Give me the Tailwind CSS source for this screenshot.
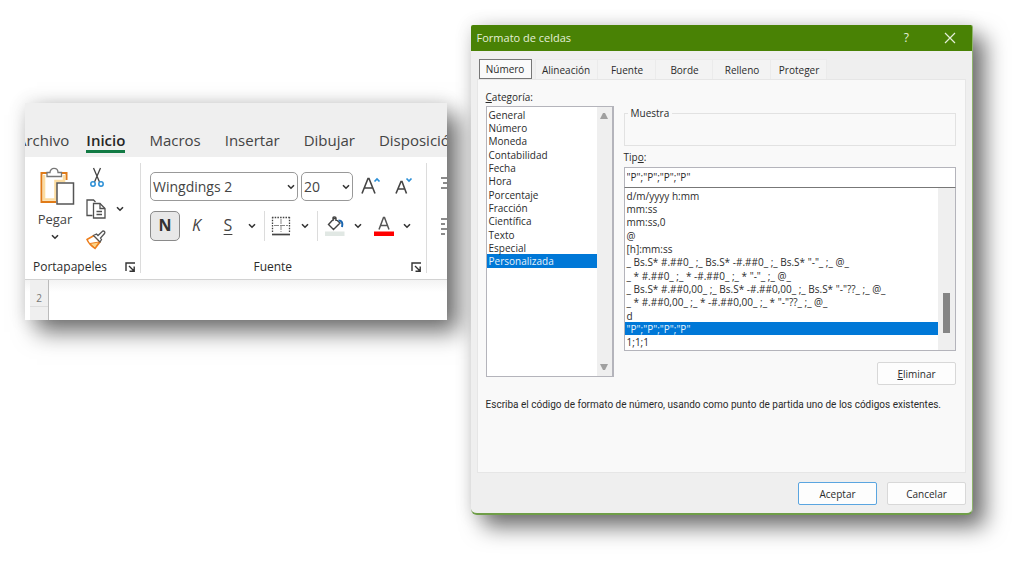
<!DOCTYPE html>
<html lang="es">
<head>
<meta charset="utf-8">
<title>Formato de celdas</title>
<script src="https://cdn.jsdelivr.net/npm/@tailwindcss/browser@4"></script>
</head>
<body class="min-h-screen bg-white font-['Open_Sans','Noto_Sans',sans-serif] text-[#2b2b2b]">
<svg class="hidden" aria-hidden="true">
  <symbol id="chev" viewBox="0 0 8 6"><path d="M1 1.2 4 4.2 7 1.2" fill="none" stroke="#333" stroke-width="1.6"/></symbol>
  <symbol id="launch" viewBox="0 0 11 11"><path d="M1 9V1H10M4 4 9 9M9.2 4.5V9.3H4.5" fill="none" stroke="#333" stroke-width="1.4"/></symbol>
</svg>
<main class="flex items-start gap-6 pt-[25px] pr-[51px] pl-[25px]">

  <!-- Cinta de opciones -->
  <section class="mt-[78px] min-w-0 flex-[422] shadow-[12px_12px_22px_rgba(0,0,0,0.55),0_0_18px_rgba(0,0,0,0.12)]">
    <div class="overflow-hidden bg-white">
      <nav class="-ml-[8px] flex h-[54px] items-end gap-[24px] bg-[#efefef] pb-1 text-[15px] leading-[19px] whitespace-nowrap text-[#444]">
        <a href="#" class="pb-[3px]">Archivo</a>
        <a href="#" class="-ml-[7px] border-b-[3px] border-[#127a44] font-semibold text-[#262626]">Inicio</a>
        <a href="#" class="pb-[3px]">Macros</a>
        <a href="#" class="pb-[3px]">Insertar</a>
        <a href="#" class="pb-[3px]">Dibujar</a>
        <a href="#" class="pb-[3px]">Disposición</a>
      </nav>
      <div class="flex h-[123px] border-b border-[#d2d2d2] py-[6px]">
        <!-- Portapapeles -->
        <div class="flex w-[116px] flex-col justify-between border-r border-[#dcdcdc]">
          <div class="flex gap-[12px] pt-1 pl-[11px]">
            <button class="flex w-[38px] flex-col items-center text-[13px] leading-[18px] text-[#444]">
              <svg class="ml-[3px] h-[40px] w-[36px]" viewBox="0 0 36 40" fill="none">
                <path d="M9 6H2.500V35H17M21 6H27.500V13" stroke="#e07b18" stroke-width="2"/>
                <path d="M5 8V32.500H16.500V14H25V8" fill="#fff" stroke="#fcdca0" stroke-width="2.600"/>
                <path d="M8 9.500V5.500H11C11 0 19 0 19 5.500H22.500V9.500Z" fill="#fff" stroke="#777" stroke-width="1.300"/>
                <rect x="18" y="16" width="16.500" height="21" fill="#fff" stroke="#555" stroke-width="1.500"/>
              </svg>
              <span class="pt-[3px]">Pegar</span>
              <svg class="mt-[6px] h-[6px] w-[8px]"><use href="#chev"/></svg>
            </button>
            <div class="flex flex-col gap-[11px]">
              <button aria-label="Cortar" class="pl-1"><svg class="h-[21px] w-[14px]" viewBox="0 0 14 21" fill="none">
                <path d="M3.500 1 9.500 15M10.500 1 4.500 15" stroke="#444" stroke-width="1.300"/>
                <circle cx="3" cy="17" r="2.200" stroke="#2b8fd6" stroke-width="1.500"/><circle cx="11" cy="17" r="2.200" stroke="#2b8fd6" stroke-width="1.500"/></svg></button>
              <button aria-label="Copiar" class="flex items-center gap-[10px]"><svg class="h-[20px] w-[20px]" viewBox="0 0 20 20" fill="none" stroke="#505050" stroke-width="1.300">
                <path d="M6.500 16.500H1V1H7.500L9.500 3"/><path d="M7.500 4.500H14L19 9.500V19H7.500Z" fill="#fff"/><path d="M14 4.500V9.500H19M10.500 12.500H16M10.500 15.500H16"/></svg>
                <svg class="h-[6px] w-[8px]"><use href="#chev"/></svg></button>
              <button aria-label="Copiar formato"><svg class="h-[20px] w-[20px]" viewBox="0 0 20 20" fill="none">
                <path d="M1 9.500 8 5.500 14 12 9 18.500C6 16.500 2.500 13 1 9.500Z" fill="#fff" stroke="#ed7d1a" stroke-width="1.500"/>
                <path d="M4 13.500 13 12 9 18Z" fill="#fbd58a" stroke="#ed7d1a" stroke-width="1"/>
                <path d="M7.500 5.500 10.500 4 12 5.500 16.500 1.200C18 .5 19.500 2 18.500 3.500L14.500 8 15.500 9.500 14 12Z" fill="#fff" stroke="#555" stroke-width="1.300"/></svg></button>
            </div>
          </div>
          <div class="flex items-center justify-between pr-1 pl-2 text-[12px] leading-3">
            <span>Portapapeles</span>
            <button aria-label="Más opciones de portapapeles"><svg class="h-[11px] w-[11px]"><use href="#launch"/></svg></button>
          </div>
        </div>
        <!-- Fuente -->
        <div class="flex min-w-0 flex-1 flex-col justify-between border-r border-[#dcdcdc] pl-[9px]">
          <div class="flex flex-col gap-[10px] pt-[9px]">
            <div class="flex items-center gap-[3px]">
              <div class="relative w-[148px]">
                <select aria-label="Fuente" class="block h-[29px] w-full appearance-none rounded-[5px] border border-[#999] bg-white pl-[2px] text-[14px] text-[#444]"><option>Wingdings 2</option></select>
                <svg class="pointer-events-none absolute top-[12px] right-[3px] h-[6px] w-[8px]"><use href="#chev"/></svg>
              </div>
              <div class="relative w-[52px]">
                <select aria-label="Tamaño de fuente" class="block h-[29px] w-full appearance-none rounded-[5px] border border-[#999] bg-white pl-[2px] text-[14px] text-[#444]"><option>20</option></select>
                <svg class="pointer-events-none absolute top-[12px] right-[3px] h-[6px] w-[8px]"><use href="#chev"/></svg>
              </div>
              <button aria-label="Aumentar tamaño" class="ml-[5px]"><svg class="h-[19px] w-[20px]" viewBox="0 0 20 19" fill="none"><path d="M1 16.500 7 1.500H8L14 16.500M3.500 11H11.500" stroke="#444" stroke-width="1.600"/><path d="M13.500 4.500 16 2 18.500 4.500" stroke="#2b8fd6" stroke-width="1.700"/></svg></button>
              <button aria-label="Disminuir tamaño" class="ml-[11px]"><svg class="h-[19px] w-[18px]" viewBox="0 0 18 19" fill="none"><path d="M1 16.500 6 4.500H7L11.500 16.500M3 12H10" stroke="#444" stroke-width="1.600"/><path d="M11.500 1.500 14 4 16.500 1.500" stroke="#2b8fd6" stroke-width="1.700"/></svg></button>
            </div>
            <div class="flex items-center text-[16px] leading-none text-[#444]">
              <button aria-label="Negrita" class="h-[30px] w-[30px] rounded-[5px] border border-[#8a8a8a] bg-[#e8e8e8] pb-[2px] font-bold text-[#333]">N</button>
              <button aria-label="Cursiva" class="w-[33px] pb-[2px] italic">K</button>
              <button aria-label="Subrayado" class="w-[30px] pb-[2px] underline underline-offset-[3px]">S</button>
              <svg class="ml-[5px] h-[6px] w-[8px]"><use href="#chev"/></svg>
              <span class="ml-[8px] h-[30px] w-px bg-[#dcdcdc]"></span>
              <button aria-label="Bordes" class="ml-[6px] flex items-center gap-[10px]"><svg class="h-[20px] w-[20px]" viewBox="0 0 20 20" fill="none" stroke="#444"><path d="M1 1.500H19M1.500 1V17M18.500 1V17" stroke-dasharray="1.500 1.200" stroke-width="1.300"/><path d="M10 3V16M3 9.500H17" stroke="#888" stroke-dasharray="5 1"/><path d="M1 18.500H19" stroke-width="1.700"/></svg>
              <svg class="h-[6px] w-[8px]"><use href="#chev"/></svg></button>
              <span class="ml-[8px] h-[30px] w-px bg-[#dcdcdc]"></span>
              <button aria-label="Color de relleno" class="ml-[7px] flex items-center gap-[9px]"><svg class="h-[20px] w-[20px]" viewBox="0 0 20 20" fill="none"><path d="M9.500 2 3.500 8.500 8.500 13.500 15 7 9.500 2M8 5V2C8 .5 11 .5 11 2V5" stroke="#444" stroke-width="1.400"/><path d="M13.500 4.500C17 4.500 18 7 17 11" stroke="#1b66b0" stroke-width="2"/><rect y="15.500" width="19.500" height="4.500" fill="#e1e8e4"/></svg>
              <svg class="h-[6px] w-[8px]"><use href="#chev"/></svg></button>
              <button aria-label="Color de fuente" class="ml-[12px] flex items-center gap-[9px]"><svg class="h-[20px] w-[20px]" viewBox="0 0 20 20" fill="none"><path d="M5 13.500 9.500 1.500H10.500L15 13.500M6.500 9.500H13.500" stroke="#555" stroke-width="1.500"/><rect y="15.500" width="20" height="4.500" fill="#f00"/></svg>
              <svg class="h-[6px] w-[8px]"><use href="#chev"/></svg></button>
            </div>
          </div>
          <div class="flex items-center pr-1 text-[12px] leading-3">
            <span class="flex-1 pr-[15px] text-center">Fuente</span>
            <button aria-label="Más opciones de fuente"><svg class="h-[11px] w-[11px]"><use href="#launch"/></svg></button>
          </div>
        </div>
        <div class="flex w-[20px] flex-col items-end gap-[29px] pt-[14px]">
          <svg class="h-[12px] w-[6px]" viewBox="0 0 6 12" stroke="#666" stroke-width="1.300"><path d="M0 1H6M2 6H6M0 11H6"/></svg>
          <svg class="h-[18px] w-[6px]" viewBox="0 0 6 18" stroke="#666" stroke-width="1.300"><path d="M0 1H6M0 6H4M0 11H6M0 16H4"/></svg>
        </div>
      </div>
      <div class="flex h-[40px] bg-linear-to-b from-[#f3f3f3] to-white to-30% pl-[5px]">
        <div class="flex w-[19px] flex-col border-r border-[#bbb] bg-[#efefef] text-center text-[10px] text-[#777]">
          <span class="border-b border-[#ddd] pt-[11px] leading-[15px]">2</span>
        </div>
      </div>
    </div>
  </section>

  <!-- Cuadro de diálogo -->
  <section role="dialog" aria-labelledby="titulo" class="min-w-0 flex-[502] overflow-hidden rounded-t-[2px] rounded-b-[6px] border-r border-b-2 border-r-[#8fb56c] border-b-[#6f9e48] bg-[#efefef] text-[10px] leading-[14px] shadow-[12px_12px_22px_rgba(0,0,0,0.55),0_0_18px_rgba(0,0,0,0.12)]">
    <header class="flex h-[26px] items-center bg-[#498205] pr-[16px] pl-[6px] text-[#e4efd8]">
      <h1 id="titulo" class="flex-1 pb-px text-[11px]">Formato de celdas</h1>
      <button aria-label="Ayuda" class="text-[12px]">?</button>
      <button aria-label="Cerrar" class="ml-[35px]"><svg class="h-[12px] w-[12px]" viewBox="0 0 12 12" stroke="#e4efd8" stroke-width="1.200"><path d="M1 1 11 11M11 1 1 11"/></svg></button>
    </header>
    <div class="px-[6px] pt-[8px] pb-[8px]">
      <div role="tablist" class="flex h-[20px] pl-[2px]">
        <button role="tab" aria-selected="true" class="mr-[3px] w-[53px] border border-[#777] bg-[#fafafa]">Número</button>
        <button role="tab" class="w-[63px] border border-b-0 border-[#ebebeb] bg-[#f3f3f3]">Alineación</button>
        <button role="tab" class="w-[58px] border border-b-0 border-l-0 border-[#ebebeb] bg-[#f3f3f3] pl-[2px]">Fuente</button>
        <button role="tab" class="w-[57px] border border-b-0 border-l-0 border-[#ebebeb] bg-[#f3f3f3] pl-[2px]">Borde</button>
        <button role="tab" class="w-[58px] border border-b-0 border-l-0 border-[#ebebeb] bg-[#f3f3f3] pl-[2px]">Relleno</button>
        <button role="tab" class="w-[56px] border border-b-0 border-l-0 border-[#ebebeb] bg-[#f3f3f3] pl-[2px]">Proteger</button>
      </div>
      <div role="tabpanel" class="h-[394px] border border-[#e6e6e6] bg-[#f9f9f9] pt-[10px] pr-[9px] pl-2">
        <div class="flex gap-[10px]">
          <div class="w-[128px]">
            <label for="cat" class="block pb-[2px]"><u>C</u>ategoría:</label>
            <div class="flex h-[271px] border border-r-2 border-[#b4b4bb] bg-[#efefef]">
              <select id="cat" size="12" class="h-full min-w-0 flex-1 overflow-hidden bg-white pt-px outline-none [&>option]:h-[13px] [&>option]:p-0 [&>option]:pl-[2px] [&>option]:leading-[13px] [&>option:nth-child(3n)]:h-[14px]">
                <option>General</option><option>Número</option><option>Moneda</option><option>Contabilidad</option><option>Fecha</option><option>Hora</option><option>Porcentaje</option><option>Fracción</option><option>Científica</option><option>Texto</option><option>Especial</option>
                <option selected class="bg-[linear-gradient(#0078d7,#0078d7)] [-webkit-text-fill-color:#e6f2fb]">Personalizada</option>
              </select>
              <div class="flex w-[15px] flex-col items-center justify-between py-[6px]">
                <svg class="h-[6px] w-[8px]" viewBox="0 0 8 6" fill="#a0a0a0"><path d="M0 6 3 0H5L8 6Z"/></svg>
                <svg class="h-[6px] w-[8px]" viewBox="0 0 8 6" fill="#a0a0a0"><path d="M0 0 3 6H5L8 0Z"/></svg>
              </div>
            </div>
          </div>
          <div class="min-w-0 flex-1 pt-[16px]">
            <fieldset class="h-[40px] border border-[#e2e2e2] pl-[3px]"><legend class="px-[3px] leading-[14px]">Muestra</legend></fieldset>
            <label for="tipo" class="block pt-[4px] pb-[3px]">Tip<u>o</u>:</label>
            <input id="tipo" value='"P";"P";"P";"P"' class="block h-[21px] w-full border border-[#b4b4bb] border-b-[#777] bg-white pb-[2px] pl-[2px] outline-none">
            <div class="flex h-[163px] border border-t-0 border-[#b4b4bb] bg-[#efefef]">
              <select aria-label="Formatos" size="12" class="h-full min-w-0 flex-1 overflow-hidden bg-white pt-px outline-none [&>option]:h-[13px] [&>option]:p-0 [&>option]:pl-[2px] [&>option]:leading-[13px] [&>option:nth-child(3n)]:h-[14px]">
                <option>d/m/yyyy h:mm</option><option>mm:ss</option><option>mm:ss,0</option><option>@</option><option>[h]:mm:ss</option>
                <option>_ Bs.S* #.##0_ ;_ Bs.S* -#.##0_ ;_ Bs.S* "-"_ ;_ @_ </option>
                <option>_ * #.##0_ ;_ * -#.##0_ ;_ * "-"_ ;_ @_ </option>
                <option>_ Bs.S* #.##0,00_ ;_ Bs.S* -#.##0,00_ ;_ Bs.S* "-"??_ ;_ @_ </option>
                <option>_ * #.##0,00_ ;_ * -#.##0,00_ ;_ * "-"??_ ;_ @_ </option>
                <option>d</option>
                <option selected class="bg-[linear-gradient(#0078d7,#0078d7)] [-webkit-text-fill-color:#e6f2fb]">"P";"P";"P";"P"</option>
                <option>1;1;1</option>
              </select>
              <div class="flex w-[17px] flex-col items-center justify-end pb-[17px]"><span class="h-[40px] w-[7px] bg-[#858585]"></span></div>
            </div>
            <div class="flex justify-end pt-[11px]"><button class="h-[23px] w-[79px] rounded-[2px] border border-[#d8d8d8] bg-[#fdfdfd]"><u>E</u>liminar</button></div>
          </div>
        </div>
        <p class="pt-[13px] font-[Roboto,sans-serif] whitespace-nowrap">Escriba el código de formato de número, usando como punto de partida uno de los códigos existentes.</p>
      </div>
      <div class="flex justify-end gap-[10px] pt-[9px]">
        <button class="h-[23px] w-[79px] rounded-[2px] border border-[#5aa5e0] bg-[#fdfdfd]">Aceptar</button>
        <button class="h-[23px] w-[79px] rounded-[2px] border border-[#d8d8d8] bg-[#fdfdfd]">Cancelar</button>
      </div>
    </div>
  </section>
</main>
</body>
</html>
